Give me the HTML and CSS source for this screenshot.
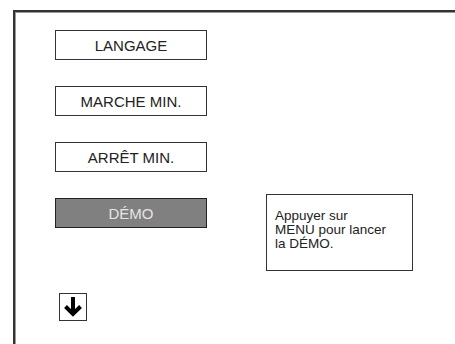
FILE: index.html
```html
<!DOCTYPE html>
<html lang="fr">
<head>
<meta charset="utf-8">
<link rel="stylesheet" href="styles.css">
</head>
<body>
<div class="frame">
  <div class="menu">
    <div class="btn">LANGAGE</div>
    <div class="btn">MARCHE MIN.</div>
    <div class="btn">ARRÊT MIN.</div>
    <div class="row">
      <div class="btn sel">DÉMO</div>
      <div class="info">Appuyer sur<br>MENU pour lancer<br>la DÉMO.</div>
    </div>
    <div class="arrow">
      <svg width="26" height="26" viewBox="0 0 26 26"><line x1="13" y1="3" x2="13" y2="20" stroke="#000" stroke-width="4"/><polyline points="5.5,12.5 13,20 20.5,12.5" fill="none" stroke="#000" stroke-width="4" stroke-linejoin="miter"/></svg>
    </div>
  </div>
</div>
</body>
</html>
```
FILE: styles.css
```css
html, body { margin: 0; padding: 0; background: #fff; overflow: hidden; }
body { width: 455px; height: 344px; font-family: "Liberation Sans", Arial, sans-serif; color: #222; }
.frame {
  margin: 10px 0 0 13px;
  width: 442px;
  height: 334px;
  border-top: 2px solid #333;
  border-left: 2px solid #333;
  box-shadow: inset 1px 1px 0 #999;
  box-sizing: border-box;
  overflow: hidden;
}
.menu {
  display: flex;
  flex-direction: column;
  align-items: flex-start;
  gap: 26px;
  padding: 18px 0 0 40px;
}
.btn {
  width: 152px;
  height: 30px;
  box-sizing: border-box;
  border: 1px solid #333;
  display: flex;
  align-items: center;
  justify-content: center;
  font-size: 15px;
  color: #222;
}
.btn.sel { background: #808080; color: #e4e4e4; border-color: #222; }
.row { display: flex; align-items: flex-start; gap: 59px; }
.info {
  margin-top: -4px;
  width: 147px;
  height: 77px;
  box-sizing: border-box;
  border: 1px solid #333;
  padding: 14px 0 0 8px;
  font-size: 13.5px;
  line-height: 14px;
  color: #222;
}
.arrow {
  margin: -4px 0 0 4px;
  width: 28px;
  height: 28px;
  box-sizing: border-box;
  border: 1px solid #333;
  display: flex;
  align-items: center;
  justify-content: center;
}
.arrow svg { display: block; }
```
